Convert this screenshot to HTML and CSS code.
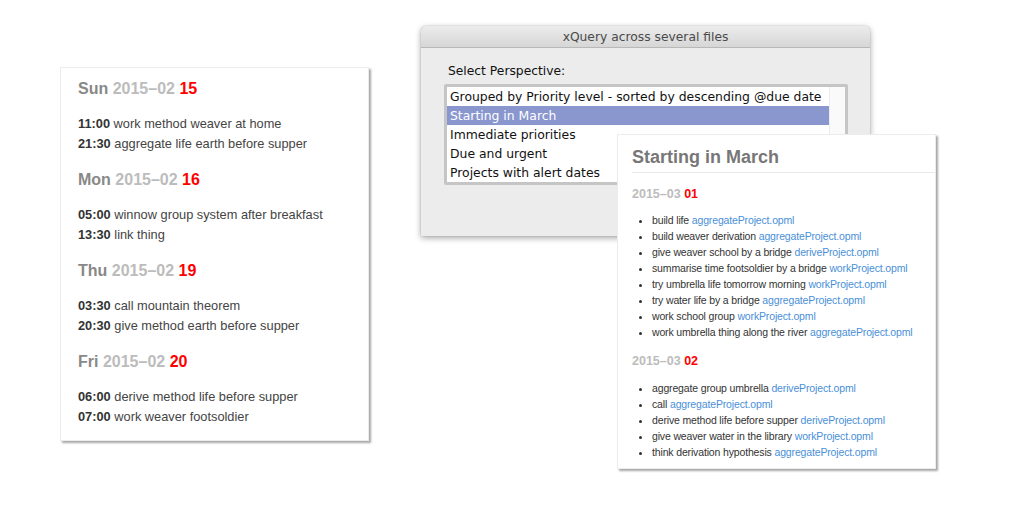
FILE: index.html
```html
<!DOCTYPE html>
<html>
<head>
<meta charset="utf-8">
<link rel="stylesheet" href="styles.css">
</head>
<body>
<div class="desk">
  <section class="card agenda">
    <div class="day">
      <h3 class="dhead"><span class="dname">Sun</span> <span class="ym">2015–02</span> <span class="dd">15</span></h3>
      <p class="item"><b>11:00</b> work method weaver at home</p>
      <p class="item"><b>21:30</b> aggregate life earth before supper</p>
    </div>
    <div class="day">
      <h3 class="dhead"><span class="dname">Mon</span> <span class="ym">2015–02</span> <span class="dd">16</span></h3>
      <p class="item"><b>05:00</b> winnow group system after breakfast</p>
      <p class="item"><b>13:30</b> link thing</p>
    </div>
    <div class="day">
      <h3 class="dhead"><span class="dname">Thu</span> <span class="ym">2015–02</span> <span class="dd">19</span></h3>
      <p class="item"><b>03:30</b> call mountain theorem</p>
      <p class="item"><b>20:30</b> give method earth before supper</p>
    </div>
    <div class="day">
      <h3 class="dhead"><span class="dname">Fri</span> <span class="ym">2015–02</span> <span class="dd">20</span></h3>
      <p class="item"><b>06:00</b> derive method life before supper</p>
      <p class="item"><b>07:00</b> work weaver footsoldier</p>
    </div>
  </section>

  <section class="dialog">
    <div class="titlebar">xQuery across several files</div>
    <div class="dbody">
      <div class="label">Select Perspective:</div>
      <div class="listbox">
        <div class="rows">
          <div class="row">Grouped by Priority level - sorted by descending @due date</div>
          <div class="row sel">Starting in March</div>
          <div class="row">Immediate priorities</div>
          <div class="row">Due and urgent</div>
          <div class="row">Projects with alert dates</div>
        </div>
        <div class="scroll"></div>
      </div>
    </div>
  </section>

  <section class="card report">
    <h2 class="rtitle">Starting in March</h2>
    <h4 class="rdate"><span class="ym">2015–03</span> <span class="dd">01</span></h4>
    <ul class="tasks">
      <li>build life <a>aggregateProject.opml</a></li>
      <li>build weaver derivation <a>aggregateProject.opml</a></li>
      <li>give weaver school by a bridge <a>deriveProject.opml</a></li>
      <li>summarise time footsoldier by a bridge <a>workProject.opml</a></li>
      <li>try umbrella life tomorrow morning <a>workProject.opml</a></li>
      <li>try water life by a bridge <a>aggregateProject.opml</a></li>
      <li>work school group <a>workProject.opml</a></li>
      <li>work umbrella thing along the river <a>aggregateProject.opml</a></li>
    </ul>
    <h4 class="rdate"><span class="ym">2015–03</span> <span class="dd">02</span></h4>
    <ul class="tasks">
      <li>aggregate group umbrella <a>deriveProject.opml</a></li>
      <li>call <a>aggregateProject.opml</a></li>
      <li>derive method life before supper <a>deriveProject.opml</a></li>
      <li>give weaver water in the library <a>workProject.opml</a></li>
      <li>think derivation hypothesis <a>aggregateProject.opml</a></li>
    </ul>
  </section>
</div>
</body>
</html>
```

FILE: styles.css
```css
html, body {
  margin: 0;
  padding: 0;
  background: #ffffff;
}
body {
  font-family: "Liberation Sans", Arial, Helvetica, sans-serif;
  color: #333;
}
.desk {
  position: relative;
  width: 1023px;
  height: 512px;
  overflow: hidden;
}
.card {
  position: absolute;
  background: #fff;
  border: 1px solid #ececec;
  box-shadow: 2px 2px 2px rgba(0,0,0,0.35);
  box-sizing: border-box;
}

/* left agenda card */
.agenda {
  left: 60px;
  top: 67px;
  width: 309px;
  height: 374px;
  padding: 11px 17px 0;
}
.day {
  margin-bottom: 16px;
}
.dhead {
  margin: 0 0 15px;
  font-size: 16px;
  line-height: 20px;
  font-weight: bold;
}
.dname { color: #888; }
.ym { color: #bcbcbc; }
.dd { color: #ff0000; }
.item {
  margin: 0;
  font-size: 12.8px;
  line-height: 20px;
  color: #444;
}
.item b {
  color: #333;
}

/* dialog */
.dialog {
  position: absolute;
  left: 421px;
  top: 26px;
  width: 449px;
  height: 210px;
  background: #ececec;
  border-radius: 5px 5px 0 0;
  box-shadow: 0 2px 6px rgba(0,0,0,0.35), 0 0 1px rgba(0,0,0,0.4);
  font-family: "DejaVu Sans", "Liberation Sans", sans-serif;
  display: flex;
  flex-direction: column;
}
.titlebar {
  height: 21px;
  line-height: 22px;
  text-align: center;
  font-size: 12.3px;
  color: #4a4a4a;
  background: linear-gradient(#ececec, #d6d6d6);
  border-bottom: 1px solid #b8b8b8;
  border-radius: 5px 5px 0 0;
}
.dbody {
  padding: 14px 0 0 23px;
}
.label {
  font-size: 12.3px;
  line-height: 18px;
  color: #111;
  margin-left: 4px;
  margin-bottom: 4px;
}
.listbox {
  display: flex;
  width: 398px;
  border: 3px solid #c5c5c5;
  border-radius: 2px;
  background: #fff;
}
.rows {
  flex: 1;
}
.row {
  height: 19px;
  line-height: 19px;
  font-size: 12.4px;
  padding-left: 3px;
  color: #111;
  white-space: nowrap;
}
.row.sel {
  background: #8a97cf;
  color: #fff;
}
.scroll {
  width: 15px;
  border-left: 1px solid #ececec;
  background: #fafafa;
}

/* right report card */
.report {
  left: 617px;
  top: 134px;
  width: 319px;
  height: 335px;
  padding: 11px 0 0 14px;
}
.rtitle {
  margin: 0;
  font-size: 18px;
  line-height: 22px;
  padding-bottom: 4px;
  color: #777;
  border-bottom: 1px solid #e8e8e8;
}
.rdate {
  margin: 13px 0 10px;
  font-size: 12.5px;
  line-height: 16px;
  font-weight: bold;
}
.tasks + .rdate {
  margin-top: 13px;
  margin-bottom: 11px;
}
.tasks {
  margin: 0;
  padding-left: 20px;
  font-size: 10.5px;
  letter-spacing: -0.15px;
  line-height: 16px;
  color: #333;
}
.tasks a {
  color: #4a8fd8;
}
```
